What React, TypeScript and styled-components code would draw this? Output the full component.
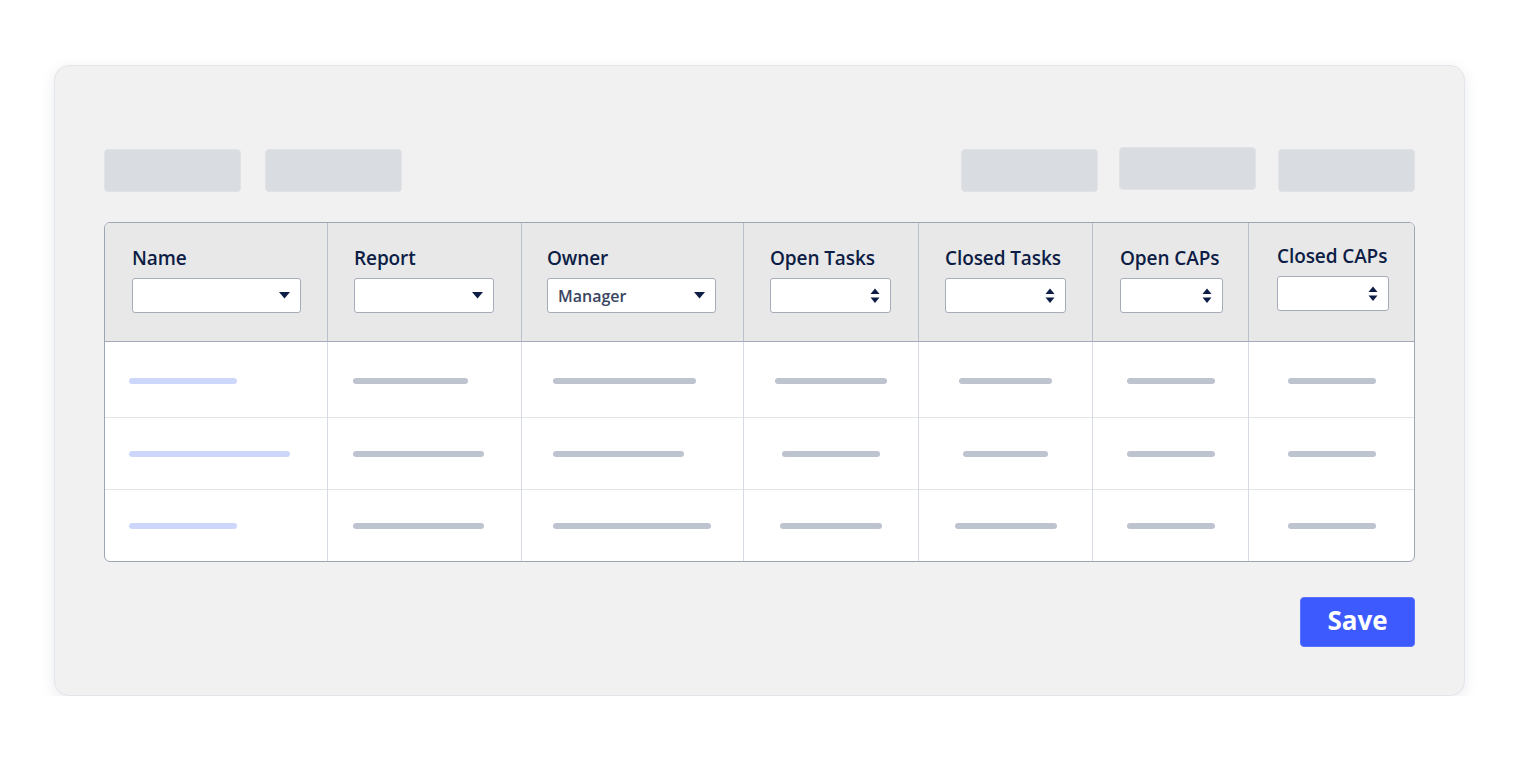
import React from "react";
import styled, { createGlobalStyle } from "styled-components";

const Global = createGlobalStyle`
  *, *::before, *::after { box-sizing: border-box; }
  html, body { margin: 0; padding: 0; background: #ffffff; }
  body { font-family: "Open Sans", "Noto Sans", sans-serif; }
`;

const Page = styled.div`
  padding: 65px 54px 0 54px;
`;

const Card = styled.div`
  width: 1411px;
  height: 631px;
  background: #f1f1f1;
  border: 1px solid #e4e5ea;
  border-radius: 15px;
  box-shadow: 0 4px 14px rgba(40, 50, 90, 0.1);
  padding: 83px 49px 0 49px;
  display: flex;
  flex-direction: column;
`;

const Toolbar = styled.div`
  display: flex;
  align-items: flex-start;
  height: 43px;
`;

const Group = styled.div<{ $gap: number }>`
  display: flex;
  align-items: flex-start;
  gap: ${(p) => p.$gap}px;
`;

const Spacer = styled.div`
  flex: 1;
`;

const Placeholder = styled.div<{ $lift?: number; $mr?: number }>`
  width: 137px;
  height: 43px;
  background: #d9dce0;
  border: 1px solid #e0e2e6;
  border-radius: 4px;
  margin-top: ${(p) => -(p.$lift || 0)}px;
  margin-right: ${(p) => p.$mr || 0}px;
`;

const Table = styled.div`
  margin-top: 30px;
  width: 1311px;
  border: 1px solid #9ea6b6;
  border-radius: 6px;
  overflow: hidden;
  background: #ffffff;
  display: grid;
  grid-template-columns: 222px 194px 222px 175px 174px 156px 166px;
`;

const HeadCell = styled.div<{ $first?: boolean; $pl: number; $pr: number; $pt?: number }>`
  background: #e8e8e8;
  border-left: ${(p) => (p.$first ? "none" : "1px solid #b9bfcb")};
  border-bottom: 1px solid #a2aab9;
  padding: ${(p) => p.$pt ?? 22}px ${(p) => p.$pr}px 0 ${(p) => p.$pl}px;
  height: 119px;
`;

const Label = styled.div`
  font-size: 19px;
  line-height: 26px;
  font-weight: 600;
  color: #0d1d45;
  white-space: nowrap;
  letter-spacing: -0.1px;
`;

const SelectBox = styled.div`
  margin-top: 7px;
  height: 35px;
  background: #ffffff;
  border: 1px solid #a6acb9;
  border-radius: 3px;
  display: flex;
  align-items: center;
  padding: 0 10px 0 10px;
`;

const SelectText = styled.span`
  flex: 1;
  font-size: 16px;
  font-weight: 600;
  color: #3a455f;
`;

const BodyCell = styled.div<{ $first?: boolean; $h: number; $last?: boolean; $align: "left" | "center"; $pl: number; $pt: number }>`
  height: ${(p) => p.$h}px;
  border-left: ${(p) => (p.$first ? "none" : "1px solid #d6dae2")};
  border-bottom: ${(p) => (p.$last ? "none" : "1px solid #e1e4e9")};
  display: flex;
  align-items: center;
  justify-content: ${(p) => (p.$align === "center" ? "center" : "flex-start")};
  padding-left: ${(p) => (p.$align === "center" ? 0 : p.$pl)}px;
  padding-top: ${(p) => p.$pt}px;
`;

const Bar = styled.div<{ $blue?: boolean }>`
  height: 6px;
  border-radius: 3px;
  background: ${(p) => (p.$blue ? "#cdd7fc" : "#bdc3cf")};
`;

const Footer = styled.div`
  margin-top: 35px;
  display: flex;
  justify-content: flex-end;
`;

const SaveButton = styled.button`
  width: 115px;
  height: 50px;
  background: #3d5afe;
  border: 1px solid #5a73fb;
  border-radius: 4px;
  color: #ffffff;
  font-family: "Open Sans", "Noto Sans", sans-serif;
  font-size: 26px;
  font-weight: 700;
  line-height: 1;
  padding: 0 0 5px 0;
  cursor: pointer;
`;

const Caret = () => (
  <svg width="11" height="7" viewBox="0 0 11 7">
    <path d="M0 0 H11 L5.5 6.5 Z" fill="#0d1d45" />
  </svg>
);

const Spin = () => (
  <svg width="10" height="16" viewBox="0 0 10 16">
    <path d="M5 0.5 L9.5 6 H0.5 Z" fill="#0d1d45" />
    <path d="M0.5 9.5 H9.5 L5 15 Z" fill="#0d1d45" />
  </svg>
);

type Col = {
  label: string;
  kind: "caret" | "spin";
  value?: string;
  pl: number;
  pr: number;
  pt?: number;
  align: "left" | "center";
  bodyPl: number;
  bars: number[];
};

const cols: Col[] = [
  { label: "Name", kind: "caret", pl: 27, pr: 26, align: "left", bodyPl: 24, bars: [108, 161, 108] },
  { label: "Report", kind: "caret", pl: 26, pr: 27, align: "left", bodyPl: 25, bars: [115, 131, 131] },
  { label: "Owner", kind: "caret", value: "Manager", pl: 25, pr: 27, align: "left", bodyPl: 31, bars: [143, 131, 158] },
  { label: "Open Tasks", kind: "spin", pl: 26, pr: 27, align: "center", bodyPl: 0, bars: [112, 98, 102] },
  { label: "Closed Tasks", kind: "spin", pl: 26, pr: 26, align: "center", bodyPl: 0, bars: [93, 85, 102] },
  { label: "Open CAPs", kind: "spin", pl: 27, pr: 25, align: "center", bodyPl: 0, bars: [88, 88, 88] },
  { label: "Closed CAPs", kind: "spin", pt: 20, pl: 28, pr: 25, align: "center", bodyPl: 0, bars: [88, 88, 88] },
];

const rows = [
  { h: 76, pt: 2 },
  { h: 72, pt: 0 },
  { h: 71, pt: 0 },
];

export default function App() {
  return (
    <>
      <Global />
      <Page>
        <Card>
          <Toolbar>
            <Group $gap={24}>
              <Placeholder />
              <Placeholder />
            </Group>
            <Spacer />
            <Group $gap={21}>
              <Placeholder />
              <Placeholder $lift={2} $mr={1} />
              <Placeholder />
            </Group>
          </Toolbar>
          <Table>
            {cols.map((c, i) => (
              <HeadCell key={c.label} $first={i === 0} $pl={c.pl} $pr={c.pr} $pt={c.pt}>
                <Label>{c.label}</Label>
                <SelectBox>
                  <SelectText>{c.value || ""}</SelectText>
                  {c.kind === "caret" ? <Caret /> : <Spin />}
                </SelectBox>
              </HeadCell>
            ))}
            {rows.map((row, r) =>
              cols.map((c, i) => (
                <BodyCell
                  key={`${r}-${i}`}
                  $first={i === 0}
                  $h={row.h}
                  $pt={row.pt}
                  $last={r === rows.length - 1}
                  $align={c.align}
                  $pl={c.bodyPl}
                >
                  <Bar $blue={i === 0} style={{ width: c.bars[r] }} />
                </BodyCell>
              ))
            )}
          </Table>
          <Footer>
            <SaveButton>Save</SaveButton>
          </Footer>
        </Card>
      </Page>
    </>
  );
}
